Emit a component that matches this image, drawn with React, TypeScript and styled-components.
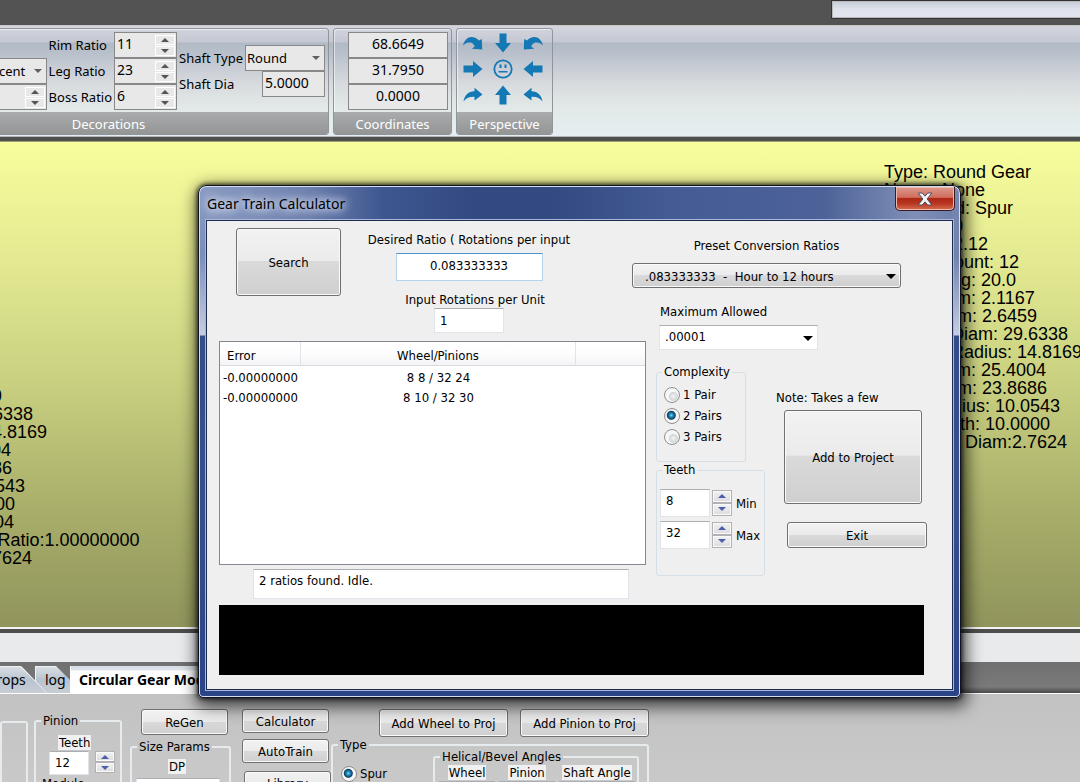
import React from "react";
import styled, { createGlobalStyle, css } from "styled-components";

const UI = `"Segoe UI", "Noto Sans", sans-serif`;
const TAHOMA = `"DejaVu Sans Condensed", "Noto Sans", sans-serif`;

const GlobalStyle = createGlobalStyle`
  *, *::before, *::after { box-sizing: border-box; }
  body { margin: 0; }
  button, input, select, table { font: inherit; color: inherit; }
  input, select, button { margin: 0; }
`;

/* ---------- page ---------- */

const Page = styled.div`
  position: relative;
  display: flex;
  flex-direction: column;
  height: 100vh;
  overflow: hidden;
  background: #c6c6c6;
  color: #000;
  font-family: ${TAHOMA};
  font-size: 13px;
  line-height: 16px;
`;

const TopStrip = styled.header`
  display: flex;
  justify-content: flex-end;
  flex: none;
  height: 25px;
  background: #535353;
`;

const TopSearch = styled.input`
  width: 260px;
  height: 19px;
  margin-right: -11px;
  border: 1px solid #333;
  box-shadow: inset 0 0 0 1px #b9b9bb;
  background: linear-gradient(#c5ccd9, #e0e3ec 50%, #e0e4ef);
`;

/* ---------- ribbon ---------- */

const Ribbon = styled.nav`
  display: flex;
  flex: none;
  gap: 4px;
  height: 112px;
  padding: 2px 0 1px;
  border-top: 1px solid #c9c9c9;
  border-bottom: 1px solid #b5b5b5;
  background: linear-gradient(#d4d6de 0, #c4c8d3 16px, #b2bac5 17px, #b7bfca 26px, #c6cbd4 40px, #d9dcdf 60px, #e2e9e8 82px, #e6eef1 100%);
  font-family: ${UI};
  font-size: 13px;
  line-height: 18px;
`;

const RibbonGroup = styled.section<{ $width: number; $pull?: number }>`
  display: flex;
  flex-direction: column;
  flex: none;
  width: ${(p) => p.$width}px;
  margin-left: ${(p) => -(p.$pull ?? 0)}px;
  border: 1px solid #90949b;
  border-radius: 3px;
  box-shadow: inset 1px 1px 0 rgba(255, 255, 255, 0.55);
  overflow: hidden;
`;

const GroupBody = styled.div<{ $icons?: boolean }>`
  display: flex;
  flex: 1;
  justify-content: ${(p) => (p.$icons ? "flex-start" : "flex-end")};
  gap: 2px;
  padding: ${(p) => (p.$icons ? "1px 0 0 1px" : "3px 3px 0")};
`;

const GroupTitle = styled.h2`
  height: 22px;
  margin: 0;
  background: linear-gradient(#a9abac, #949696);
  color: #fff;
  font-size: 13px;
  font-weight: 400;
  line-height: 24px;
  text-align: center;
`;

const Stack = styled.div<{ $top?: number; $end?: boolean }>`
  display: flex;
  flex-direction: column;
  align-items: ${(p) => (p.$end ? "flex-end" : "stretch")};
  padding-top: ${(p) => p.$top ?? 0}px;
`;

const RibbonLabel = styled.label`
  height: 26px;
  line-height: 26px;
  white-space: nowrap;
`;

const RibbonField = styled.div<{ $width: number }>`
  position: relative;
  display: flex;
  align-items: center;
  width: ${(p) => p.$width}px;
  height: 26px;
  border: 1px solid #888;
  background: #e8e8e8;
`;

const RibbonInput = styled.input<{ $center?: boolean }>`
  flex: 1;
  min-width: 0;
  height: 24px;
  padding: 0 2px 3px;
  border: 0;
  background: transparent;
  font-size: 14px;
  text-align: ${(p) => (p.$center ? "center" : "left")};
`;

const RibbonSelect = styled.select`
  width: 100%;
  height: 24px;
  padding: 0 1px;
  border: 0;
  appearance: none;
  background: transparent;
`;

const Caret = styled.span<{ $big?: boolean }>`
  position: absolute;
  top: 50%;
  right: ${(p) => (p.$big ? 5 : 4)}px;
  margin-top: -2px;
  border: solid transparent;
  border-width: ${(p) => (p.$big ? "5px 5px 0" : "4px 4px 0")};
  border-top-color: ${(p) => (p.$big ? "#000" : "#5f5f5f")};
  pointer-events: none;
`;

const RibbonSpin = styled.span`
  display: flex;
  flex-direction: column;
  gap: 1px;
  width: 20px;
  margin-right: 1px;
`;

const RibbonSpinButton = styled.button`
  display: grid;
  place-items: center;
  height: 10px;
  padding: 0;
  border: 1px solid #fff;
  background: #e8e8e8;
`;

const Arrow = styled.i<{ $down?: boolean; $color?: string }>`
  width: 0;
  height: 0;
  border: solid transparent;
  ${(p) =>
    p.$down
      ? css`border-width: 4px 4px 0; border-top-color: ${p.$color ?? "#555"};`
      : css`border-width: 0 4px 4px; border-bottom-color: ${p.$color ?? "#555"};`}
`;

const IconGrid = styled.div`
  display: grid;
  grid-template-columns: repeat(3, 30px);
  grid-template-rows: repeat(3, 26px);
`;

const IconButton = styled.button`
  display: grid;
  place-items: center;
  padding: 0;
  border: 0;
  background: none;
`;

/* ---------- canvas ---------- */

const Canvas = styled.main`
  display: flex;
  justify-content: space-between;
  flex: none;
  height: 496px;
  border-top: 4px solid #4c4f4c;
  border-bottom: 4px solid #4e4e4e;
  overflow: hidden;
  background: linear-gradient(#f8fd9c 0, #e3e991 25%, #c8cf7f 50%, #a6ab68 78%, #90945c 100%);
  box-shadow: inset 0 -2px 0 #f4f4f4, inset 0 1px 0 #9a9d78;
`;

const Readout = styled.ul<{ $top: number; $side: "left" | "right" }>`
  width: 196px;
  margin: 0;
  margin-left: ${(p) => (p.$side === "left" ? -151 : 0)}px;
  padding: ${(p) => p.$top}px 0 0;
  list-style: none;
  font-family: "Liberation Sans", Arial, sans-serif;
  font-size: 18px;
  line-height: 18px;
  white-space: nowrap;
`;

const StatusBand = styled.div`
  flex: none;
  height: 29px;
  background: #e9eaec;
`;

/* ---------- tabs ---------- */

const TabStrip = styled.div`
  display: flex;
  align-items: flex-end;
  flex: none;
  height: 32px;
  border-bottom: 1px solid #fff;
  background: linear-gradient(#707070, #7a7a7a 80%, #484848);
  font-family: ${UI};
  font-size: 14px;
`;

const TabShape = styled.button<{ $width: number; $pull?: number }>`
  flex: none;
  width: ${(p) => p.$width}px;
  height: 27px;
  margin-left: ${(p) => -(p.$pull ?? 0)}px;
  padding: 0 8px 0 9px;
  border: 0;
  border-top: 1px solid #eef1f5;
  border-left: 1px solid #eef1f5;
  background: linear-gradient(#d9dee4, #b8c3d0 50%, #c9ced4);
  clip-path: polygon(0 0, calc(100% - 14px) 0, 100% 14px, 100% 100%, 0 100%);
  text-align: left;
`;

const SlantTab = styled(TabShape)`
  position: relative;
  z-index: 1;
  padding: 0 8px 0 7px;
  clip-path: polygon(0 0, calc(100% - 26px) 0, 100% 100%, 0 100%);
  background:
    linear-gradient(to top right, transparent 49%, #f4f6f8 50%, #f4f6f8 53%, transparent 54%) right / 26px 100% no-repeat,
    linear-gradient(#d9dee4, #b8c3d0 50%, #c9ced4);
`;

const ActiveTab = styled.button`
  flex: none;
  width: 160px;
  height: 27px;
  padding: 0 8px;
  border: 0;
  border-left: 1px solid #fff;
  background: linear-gradient(#d5dce6 0, #dfe5ec 4px, #fdfdfd 5px, #fff);
  font-weight: 700;
  text-align: left;
  white-space: nowrap;
`;

/* ---------- shared classic controls ---------- */

const Button = styled.button<{ $w: number; $h: number; $ml?: number }>`
  flex: none;
  width: ${(p) => p.$w}px;
  height: ${(p) => p.$h}px;
  margin-left: ${(p) => p.$ml ?? 0}px;
  padding: 2px 0 0;
  border: 1px solid #707070;
  border-radius: 3px;
  box-shadow: inset 0 0 0 1px #fafafa;
  background: linear-gradient(#f2f2f2, #ebebeb 48%, #dadada 49%, #cfcfcf);
  white-space: nowrap;
`;

const TextInput = styled.input<{ $w: number; $h: number; $center?: boolean; $focus?: boolean; $ml?: number }>`
  flex: none;
  width: ${(p) => p.$w}px;
  height: ${(p) => p.$h}px;
  margin-left: ${(p) => p.$ml ?? 0}px;
  padding: 0 5px ${(p) => (p.$h > 28 ? 8 : p.$h < 26 ? 1 : 4)}px;
  border: 1px solid ${(p) => (p.$focus ? "#b5d4ee" : "#e2e3ea")};
  border-top-color: ${(p) => (p.$focus ? "#4c94cf" : "#abadb3")};
  background: #fff;
  text-align: ${(p) => (p.$center ? "center" : "left")};
`;

const Group = styled.fieldset<{ $w: number; $h: number; $bright?: boolean }>`
  flex: none;
  min-width: 0;
  width: ${(p) => p.$w}px;
  height: ${(p) => p.$h}px;
  margin: 0;
  padding: 0;
  border: ${(p) => (p.$bright ? "2px solid #e6ebee" : "1px solid #d5dfe5")};
  border-radius: 3px;
`;

const Legend = styled.legend`
  height: 16px;
  margin-left: 5px;
  padding: 0 2px;
  line-height: 16px;
`;

const RadioLabel = styled.label`
  display: flex;
  align-items: center;
  gap: 3px;
  height: 16px;
`;

const Radio = styled.input`
  flex: none;
  width: 16px;
  height: 16px;
  border: 1px solid #8e8f8f;
  border-radius: 50%;
  appearance: none;
  background: radial-gradient(circle at 60% 60%, #f4f4f4 0, #d3d5d8 4px, #f6f6f6 5px);
  &:checked {
    background: radial-gradient(circle at 45% 45%, #a6f0ff 0, #35a8d6 1px, #17628f 3px, #0e3f60 4px, #f6f6f6 5px);
  }
`;

const SpinBox = styled.span`
  display: flex;
  flex-direction: column;
  flex: none;
  width: 20px;
`;

const SpinButton = styled.button<{ $small?: boolean }>`
  display: grid;
  place-items: center;
  height: ${(p) => (p.$small ? 11 : 13)}px;
  padding: 0;
  border: 1px solid #b2b2b6;
  box-shadow: inset 0 0 0 1px #fafafa;
  background: linear-gradient(#f2f2f2, #dcdcdc);
`;

/* ---------- dialog ---------- */

const Dialog = styled.section`
  position: absolute;
  top: 185px;
  left: 198px;
  width: 763px;
  padding: 0 7px 7px;
  border: 1px solid #10141f;
  border-radius: 8px 8px 5px 5px;
  box-shadow: inset 0 0 0 1px #d5def0, 0 0 4px 1px rgba(0, 0, 0, 0.75), 2px 5px 16px 4px rgba(0, 0, 0, 0.65);
  background:
    linear-gradient(#8b9cc2 0, #7c8eba 70px, #c5cee1 149px, transparent 150px) left / 8px 100% no-repeat,
    linear-gradient(#7687b3 0, #7182ac 70px, #c5cee1 149px, transparent 150px) right / 8px 100% no-repeat,
    linear-gradient(90deg, #8c9cc2 0, #6f82b0 14%, #3f5790 24%, #324a80 36%, #324a80 46%, #445b94 62%, #4c6298 82%, #7f8fb6 94%, #6c7eab 100%) top / 100% 36px no-repeat,
    linear-gradient(#2f4a82, #35508f 60%, #2b4488);
`;

const TitleBar = styled.header`
  display: flex;
  justify-content: space-between;
  height: 34px;
`;

const DialogTitle = styled.h1`
  margin: 0;
  padding-left: 1px;
  font-family: ${UI};
  font-size: 14px;
  font-weight: 400;
  line-height: 35px;
  text-shadow: 0 0 8px #dfe6f4, 0 0 8px #dfe6f4, 0 0 12px #c8d3ea;
`;

const CloseButton = styled.button`
  display: grid;
  place-items: center;
  width: 60px;
  height: 24px;
  margin-top: 1px;
  margin-right: -2px;
  padding: 0;
  border: 1px solid #3b1a22;
  border-top: 0;
  border-radius: 0 0 5px 5px;
  box-shadow: inset 0 0 0 1px #ecb9ae;
  background: linear-gradient(#dd9a8e, #cf6d5c 45%, #ae2a17 50%, #b6331f 70%, #d76f50);
`;

const Client = styled.div`
  display: grid;
  grid-template-columns: 427px 1fr;
  min-height: 470px;
  padding: 7px 12px 14px;
  border: 1px solid #1d2b50;
  box-shadow: 0 0 0 1px #aab8d8;
  background: #efefef;
`;

const LeftColumn = styled.div`
  display: flex;
  flex-direction: column;
`;

const TopRow = styled.div`
  display: flex;
  gap: 24px;
  height: 113px;
  padding-left: 17px;
`;

const RatioFields = styled.div`
  display: flex;
  flex-direction: column;
  align-items: center;
  width: 208px;
`;

const Caption = styled.label<{ $mt: number; $mb?: number; $indent?: number }>`
  margin: ${(p) => p.$mt}px 0 ${(p) => p.$mb ?? 0}px;
  padding-left: ${(p) => p.$indent ?? 0}px;
  white-space: nowrap;
`;

const ListView = styled.div`
  height: 224px;
  border: 1px solid #828790;
  background: #fff;
`;

const Results = styled.table`
  width: 100%;
  border-spacing: 0;
  table-layout: fixed;

  thead th {
    height: 24px;
    padding: 4px 7px 0;
    border-right: 1px solid #e2e3e6;
    border-bottom: 1px solid #d9dbde;
    background: linear-gradient(#fff, #fdfdfe 50%, #f3f4f6);
    font-weight: 400;
    text-align: left;
  }
  thead th:last-child { border-right: 0; }
  td { height: 20px; padding: 3px 3px 0; }
  td:nth-child(2), thead th:nth-child(2) { text-align: center; }
`;

const RightColumn = styled.div`
  display: flex;
  flex-direction: column;
  padding-left: 10px;
`;

const PresetBlock = styled.div`
  display: flex;
  flex-direction: column;
  align-items: center;
  width: 269px;
  margin-left: -24px;
`;

const SelectWrap = styled.div<{ $w: number; $flat?: boolean }>`
  position: relative;
  width: ${(p) => p.$w}px;
  height: 25px;
  margin-left: ${(p) => (p.$flat ? 3 : 0)}px;
`;

const Select = styled.select<{ $flat?: boolean }>`
  width: 100%;
  height: 100%;
  appearance: none;
  white-space: pre;
  ${(p) =>
    p.$flat
      ? css`
          padding: 0 5px 2px;
          border: 1px solid #e2e3ea;
          border-top-color: #abadb3;
          background: #fff;
        `
      : css`
          padding: 2px 12px 0;
          border: 1px solid #707070;
          border-radius: 3px;
          box-shadow: inset 0 0 0 1px #fafafa;
          background: linear-gradient(#f2f2f2, #ebebeb 48%, #dadada 49%, #cfcfcf);
        `}
`;

const Lower = styled.div`
  display: flex;
  gap: 11px;
  padding-top: 14px;
`;

const Groups = styled.div`
  display: flex;
  flex-direction: column;
  width: 109px;
`;

const Radios = styled.div`
  display: flex;
  flex-direction: column;
  gap: 5px;
  padding: 7px 0 0 7px;
`;

const TeethRows = styled.div`
  display: flex;
  flex-direction: column;
  gap: 3px;
  padding: 10px 0 0 3px;
`;

const TeethRow = styled.div`
  display: flex;
  align-items: center;
  gap: 2px;
  height: 29px;
  label { padding: 2px 0 0 2px; }
`;

const Actions = styled.div`
  display: flex;
  flex-direction: column;
`;

const Display = styled.div`
  grid-column: 1 / -1;
  width: 705px;
  height: 70px;
  margin-top: 6px;
  background: #000;
`;

/* ---------- bottom panel ---------- */

const Panel = styled.section`
  display: flex;
  flex: 1;
  min-height: 0;
  overflow: hidden;
  background: linear-gradient(#c2c2c2, #c9c9c9);
`;

const PanelColumn = styled.div<{ $w: number; $top: number; $ml?: number }>`
  display: flex;
  flex-direction: column;
  flex: none;
  width: ${(p) => p.$w}px;
  margin-left: ${(p) => p.$ml ?? 0}px;
  padding-top: ${(p) => p.$top}px;
`;

const Row = styled.div<{ $gap?: number; $pad?: string }>`
  display: flex;
  gap: ${(p) => p.$gap ?? 0}px;
  padding: ${(p) => p.$pad ?? "0"};
`;

const TypeBody = styled.div`
  display: flex;
  margin-top: -4px;
`;

const ChipLabel = styled.label`
  padding: 0 1px;
  background: #f0f0f0;
  line-height: 15px;
  white-space: nowrap;
`;

const AngleField = styled.div<{ $w: number }>`
  display: flex;
  flex-direction: column;
  align-items: center;
  gap: 1px;
  width: ${(p) => p.$w}px;
`;

/* ---------- icons ---------- */

const BLUE = "#1478b4";

const Straight = ({ turn }: { turn: number }) => (
  <svg width="20" height="20" viewBox="0 0 20 20">
    <path d="M.500 6.500h9.500V2l9.500 8-9.500 8v-4.500H.500z" fill={BLUE} transform={`rotate(${turn} 10 10)`} />
  </svg>
);

const Dive = ({ flip }: { flip?: boolean }) => (
  <svg width="20" height="14" viewBox="0 0 20 14">
    <path
      d="M0 9.500C1.500 4 4.500 1 8.500 1c3 0 5.500 1.200 7.400 3.600L18.800 3l.4 10.500-10.400-.7 3-2.200C10.600 7.600 9 6.600 7 6.500 4.300 6.300 2 7.500 0 9.500z"
      fill={BLUE}
      transform={flip ? "matrix(-1 0 0 1 20 0)" : undefined}
    />
  </svg>
);

const Share = ({ flip }: { flip?: boolean }) => (
  <svg width="20" height="16" viewBox="0 0 20 16">
    <path
      d="M.5 14.500C1.500 8 5.500 4.300 11.500 4.200V.800L19.500 7.500l-8 6V9.800C7 9.500 3.500 10.800.500 14.500z"
      fill={BLUE}
      transform={flip ? "matrix(-1 0 0 1 20 0)" : undefined}
    />
  </svg>
);

const Face = () => (
  <svg width="20" height="20" viewBox="0 0 20 20" fill="none" stroke={BLUE}>
    <circle cx="10" cy="10" r="8.700" strokeWidth="1.800" />
    <path d="M7.500 5.500v3.500M12.500 5.500v3.500" strokeWidth="2" />
    <path d="M5.500 12.800h9" strokeWidth="1.600" />
  </svg>
);

const CloseX = () => (
  <svg width="16" height="14" viewBox="0 0 16 14">
    <path
      d="M1.200 1h4L8 4.200 10.800 1h4l-4.700 6 4.700 6h-4L8 9.800 5.200 13h-4l4.700-6z"
      fill="#f4f4f4"
      stroke="#4a5268"
      strokeWidth="1"
    />
  </svg>
);

/* ---------- small composites ---------- */

function RibbonSpinner({ id, value, width = 63 }: { id: string; value: string; width?: number }) {
  return (
    <RibbonField $width={width}>
      <RibbonInput id={id} defaultValue={value} aria-label={id} />
      <RibbonSpin>
        <RibbonSpinButton aria-label="Increase"><Arrow /></RibbonSpinButton>
        <RibbonSpinButton aria-label="Decrease"><Arrow $down /></RibbonSpinButton>
      </RibbonSpin>
    </RibbonField>
  );
}

function Spinner({ small }: { small?: boolean }) {
  return (
    <SpinBox>
      <SpinButton $small={small} aria-label="Increase"><Arrow $color="#4c5fae" /></SpinButton>
      <SpinButton $small={small} aria-label="Decrease"><Arrow $down $color="#4c5fae" /></SpinButton>
    </SpinBox>
  );
}

const gearInfo = [
  "Type: Round Gear",
  "Name: None",
  "Gear Kind: Spur",
  "Module: 0",
  "Module: 2.12",
  "Driven Count: 12",
  "Press. Ang: 20.0",
  "Addendum: 2.1167",
  "Dedendum: 2.6459",
  "Outside Diam: 29.6338",
  "Outside Radius: 14.8169",
  "Pitch Diam: 25.4004",
  "Base Diam: 23.8686",
  "Pitch Radius: 10.0543",
  "Face Width: 10.0000",
];
const rightInfo = [...gearInfo, "Min Shaft Diam:2.7624"];
const leftInfo = [
  ...gearInfo.slice(7),
  "Center Dist: 25.4004",
  "Transmission End Ratio:1.00000000",
  "Min Shaft Diam:2.7624",
];

const results = [
  ["-0.00000000", "8 8 / 32 24"],
  ["-0.00000000", "8 10 / 32 30"],
];

const perspective: [string, React.ReactNode][] = [
  ["Top left", <Dive />],
  ["Top", <Straight turn={90} />],
  ["Top right", <Dive flip />],
  ["Left", <Straight turn={0} />],
  ["Front", <Face />],
  ["Right", <Straight turn={180} />],
  ["Bottom left", <Share />],
  ["Bottom", <Straight turn={-90} />],
  ["Bottom right", <Share flip />],
];

function RibbonBar() {
  return (
    <Ribbon>
      <RibbonGroup $width={441} $pull={112}>
        <GroupBody>
          <Stack $top={26}>
            <RibbonField $width={70}>
              <RibbonSelect aria-label="Style" defaultValue="Percent"><option>Percent</option></RibbonSelect>
              <Caret />
            </RibbonField>
            <RibbonSpinner id="percent" value="" width={70} />
          </Stack>
          <Stack>
            <RibbonLabel htmlFor="rim">Rim Ratio</RibbonLabel>
            <RibbonLabel htmlFor="leg">Leg Ratio</RibbonLabel>
            <RibbonLabel htmlFor="boss">Boss Ratio</RibbonLabel>
          </Stack>
          <Stack>
            <RibbonSpinner id="rim" value="11" />
            <RibbonSpinner id="leg" value="23" />
            <RibbonSpinner id="boss" value="6" />
          </Stack>
          <Stack $top={13}>
            <RibbonLabel htmlFor="shaft-type">Shaft Type</RibbonLabel>
            <RibbonLabel htmlFor="shaft-dia">Shaft Dia</RibbonLabel>
          </Stack>
          <Stack $top={13} $end>
            <RibbonField $width={80}>
              <RibbonSelect id="shaft-type" defaultValue="Round"><option>Round</option></RibbonSelect>
              <Caret />
            </RibbonField>
            <RibbonField $width={63}>
              <RibbonInput id="shaft-dia" defaultValue="5.0000" />
            </RibbonField>
          </Stack>
        </GroupBody>
        <GroupTitle>Decorations</GroupTitle>
      </RibbonGroup>
      <RibbonGroup $width={119}>
        <GroupBody>
          <Stack>
            {["68.6649", "31.7950", "0.0000"].map((v) => (
              <RibbonField key={v} $width={100}>
                <RibbonInput $center defaultValue={v} aria-label="Coordinate" />
              </RibbonField>
            ))}
          </Stack>
        </GroupBody>
        <GroupTitle>Coordinates</GroupTitle>
      </RibbonGroup>
      <RibbonGroup $width={97}>
        <GroupBody $icons>
          <IconGrid>
            {perspective.map(([name, icon]) => (
              <IconButton key={name} aria-label={name}>{icon}</IconButton>
            ))}
          </IconGrid>
        </GroupBody>
        <GroupTitle>Perspective</GroupTitle>
      </RibbonGroup>
    </Ribbon>
  );
}

function CalculatorDialog() {
  return (
    <Dialog role="dialog" aria-labelledby="calc-title">
      <TitleBar>
        <DialogTitle id="calc-title">Gear Train Calculator</DialogTitle>
        <CloseButton aria-label="Close"><CloseX /></CloseButton>
      </TitleBar>
      <Client>
        <LeftColumn>
          <TopRow>
            <Button $w={105} $h={68}>Search</Button>
            <RatioFields>
              <Caption htmlFor="ratio" $mt={4} $mb={5}>Desired Ratio ( Rotations per input</Caption>
              <TextInput id="ratio" $w={147} $h={28} $center $focus defaultValue="0.083333333" />
              <Caption htmlFor="rotations" $mt={11} $indent={12}>Input Rotations per Unit</Caption>
              <TextInput id="rotations" $w={70} $h={25} defaultValue="1" />
            </RatioFields>
          </TopRow>
          <ListView>
            <Results>
              <colgroup>
                <col style={{ width: 81 }} />
                <col style={{ width: 275 }} />
                <col />
              </colgroup>
              <thead>
                <tr><th>Error</th><th>Wheel/Pinions</th><th aria-label="Spare" /></tr>
              </thead>
              <tbody>
                {results.map(([err, wheel]) => (
                  <tr key={wheel}><td>{err}</td><td>{wheel}</td><td /></tr>
                ))}
              </tbody>
            </Results>
          </ListView>
          <Row $pad="4px 0 0 34px">
            <TextInput aria-label="Status" $w={376} $h={30} readOnly value="2 ratios found. Idle." />
          </Row>
        </LeftColumn>
        <RightColumn>
          <PresetBlock>
            <Caption htmlFor="preset" $mt={10} $mb={9}>Preset Conversion Ratios</Caption>
            <SelectWrap $w={269}>
              <Select id="preset" defaultValue="a">
                <option value="a">{".083333333\u00a0 -\u00a0 Hour to 12 hours"}</option>
              </Select>
              <Caret $big />
            </SelectWrap>
          </PresetBlock>
          <Row $pad="16px 0 5px 4px"><label htmlFor="max-error">Maximum Allowed</label></Row>
          <SelectWrap $w={159} $flat>
            <Select id="max-error" $flat defaultValue=".00001"><option>.00001</option></Select>
            <Caret $big />
          </SelectWrap>
          <Lower>
            <Groups>
              <Group $w={90} $h={98}>
                <Legend>Complexity</Legend>
                <Radios>
                  <RadioLabel><Radio type="radio" name="pairs" />1 Pair</RadioLabel>
                  <RadioLabel><Radio type="radio" name="pairs" defaultChecked />2 Pairs</RadioLabel>
                  <RadioLabel><Radio type="radio" name="pairs" />3 Pairs</RadioLabel>
                </Radios>
              </Group>
              <Group $w={109} $h={114}>
                <Legend>Teeth</Legend>
                <TeethRows>
                  <TeethRow>
                    <TextInput id="teeth-min" $w={50} $h={28} defaultValue="8" />
                    <Spinner />
                    <label htmlFor="teeth-min">Min</label>
                  </TeethRow>
                  <TeethRow>
                    <TextInput id="teeth-max" $w={50} $h={28} defaultValue="32" />
                    <Spinner />
                    <label htmlFor="teeth-max">Max</label>
                  </TeethRow>
                </TeethRows>
              </Group>
            </Groups>
            <Actions>
              <Caption as="p" $mt={26} $mb={4}>Note: Takes a few</Caption>
              <Button $w={138} $h={94} $ml={8}>Add to Project</Button>
              <Row $pad="18px 0 0"><Button $w={140} $h={26} $ml={11}>Exit</Button></Row>
            </Actions>
          </Lower>
        </RightColumn>
        <Display />
      </Client>
    </Dialog>
  );
}

function BottomPanel() {
  return (
    <Panel>
      <PanelColumn $w={28} $top={27}>
        <Group $bright $w={28} $h={120} aria-label="Wheel" />
      </PanelColumn>
      <PanelColumn $w={89} $top={19} $ml={6}>
        <Group $bright $w={88} $h={120}>
          <Legend>Pinion</Legend>
          <Row $pad="6px 0 1px 22px"><ChipLabel htmlFor="pinion-teeth">Teeth</ChipLabel></Row>
          <Row $gap={6} $pad="0 0 1px 13px">
            <TextInput id="pinion-teeth" $w={40} $h={24} defaultValue="12" />
            <Spinner small />
          </Row>
          <Row $pad="0 0 0 6px"><label>Module</label></Row>
        </Group>
      </PanelColumn>
      <PanelColumn $w={101} $top={15} $ml={7}>
        <Button $w={87} $h={26} $ml={11}>ReGen</Button>
        <Row $pad="4px 0 0">
          <Group $bright $w={101} $h={120}>
            <Legend>Size Params</Legend>
            <Row $pad="4px 0 4px 36px"><ChipLabel htmlFor="dp">DP</ChipLabel></Row>
            <TextInput id="dp" $w={84} $h={24} $ml={4} defaultValue="" />
          </Group>
        </Row>
      </PanelColumn>
      <PanelColumn $w={88} $top={15} $ml={11}>
        <Button $w={87} $h={24}>Calculator</Button>
        <Row $pad="6px 0 8px"><Button $w={87} $h={24}>AutoTrain</Button></Row>
        <Button $w={87} $h={24} $ml={2}>Library</Button>
      </PanelColumn>
      <PanelColumn $w={319} $top={15} $ml={1}>
        <Row $gap={12} $pad="0 0 0 48px">
          <Button $w={129} $h={28}>Add Wheel to Proj</Button>
          <Button $w={129} $h={28}>Add Pinion to Proj</Button>
        </Row>
        <Group $bright $w={318} $h={120}>
          <Legend>Type</Legend>
          <TypeBody>
            <Row $pad="17px 0 0 8px">
              <RadioLabel><Radio type="radio" name="type" defaultChecked />Spur</RadioLabel>
            </Row>
            <Row $pad="0 0 0 46px">
              <Group $bright $w={206} $h={90}>
                <Legend>Helical/Bevel Angles</Legend>
                <Row $gap={2} $pad="0 0 0 3px">
                  {([["Wheel", 58], ["Pinion", 58], ["Shaft Angle", 78]] as [string, number][]).map(([name, w]) => (
                    <AngleField key={name} $w={w}>
                      <ChipLabel htmlFor={name}>{name}</ChipLabel>
                      <TextInput id={name} $w={w} $h={24} defaultValue="" />
                    </AngleField>
                  ))}
                </Row>
              </Group>
            </Row>
          </TypeBody>
        </Group>
      </PanelColumn>
    </Panel>
  );
}

export default function App() {
  return (
    <Page>
      <GlobalStyle />
      <TopStrip><TopSearch aria-label="Search" /></TopStrip>
      <RibbonBar />
      <Canvas>
        <Readout $side="left" $top={228}>{leftInfo.map((t, i) => <li key={i}>{t}</li>)}</Readout>
        <Readout $side="right" $top={22}>{rightInfo.map((t, i) => <li key={i}>{t}</li>)}</Readout>
      </Canvas>
      <StatusBand />
      <TabStrip>
        <SlantTab $width={67} $pull={20}>Props</SlantTab>
        <TabShape $width={35} $pull={12}>log</TabShape>
        <ActiveTab>Circular Gear Modes</ActiveTab>
      </TabStrip>
      <BottomPanel />
      <CalculatorDialog />
    </Page>
  );
}
